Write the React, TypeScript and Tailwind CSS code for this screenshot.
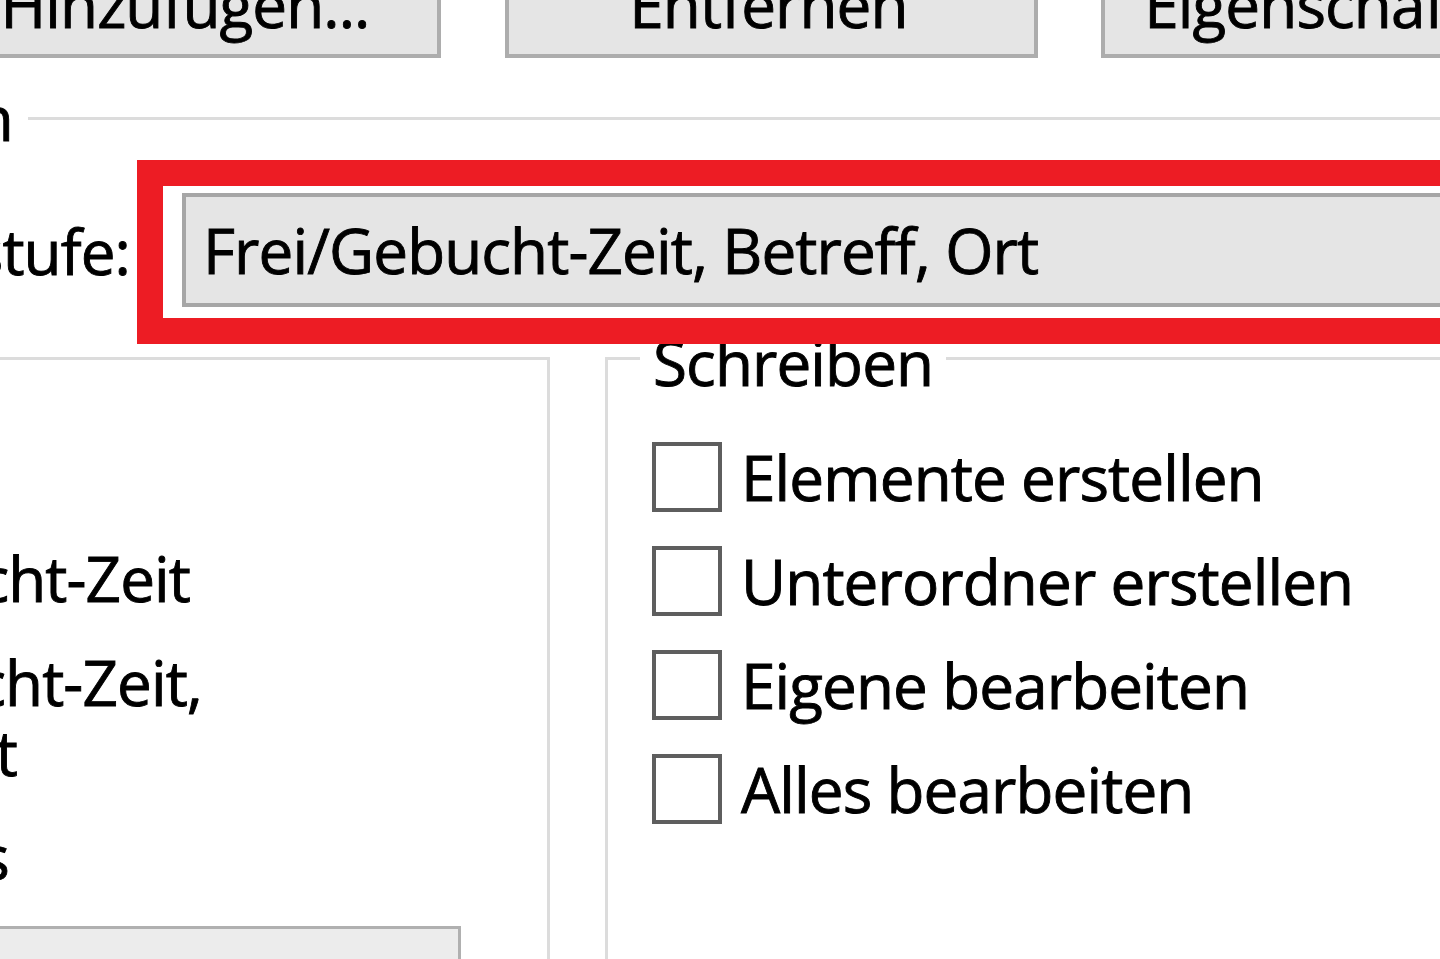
import React from "react";

function Btn({ label, className }: { label: string; className: string }) {
  return (
    <div
      className={
        "shrink-0 h-[100px] border-[4px] border-[#adadad] bg-[#e5e5e5] flex items-end justify-center pb-[15px] whitespace-nowrap " +
        className
      }
    >
      {label}
    </div>
  );
}

function EndText({ end, children }: { end: string; children: React.ReactNode }) {
  return (
    <div className={"flex justify-end whitespace-nowrap h-[70px] " + end}>
      <span>{children}</span>
    </div>
  );
}

function Check({ label }: { label: string }) {
  return (
    <div className="flex items-start h-[70px]">
      <div className="w-[70px] h-[70px] shrink-0 border-[4px] border-[#5e5e5e] bg-white" />
      <span className="ml-[19px] whitespace-nowrap">{label}</span>
    </div>
  );
}

export default function App() {
  return (
    <div className="w-[1440px] h-[959px] overflow-hidden bg-white text-black font-['Open_Sans','Noto_Sans',sans-serif] text-[62px] leading-[70px] tracking-[-0.9px] [-webkit-text-stroke:0.9px_#000] flex flex-col">
      {/* top buttons */}
      <div className="flex items-end h-[58px] shrink-0">
        <Btn label="Hinzufügen..." className="ml-[-111px] w-[552px] pl-[40px]" />
        <Btn label="Entfernen" className="ml-[64px] w-[533px] pr-[6px]" />
        <Btn label="Eigenschaften" className="ml-[63px] w-[533px] pr-[54px]" />
      </div>

      {/* group box header "Berechtigungen" */}
      <div className="flex items-start mt-[24px] shrink-0">
        <EndText end="w-[13px]">Berechtigungen</EndText>
        <div className="ml-[15px] mt-[35px] flex-1 h-[3px] bg-[#dcdcdc]" />
      </div>

      {/* permission level row */}
      <div className="flex items-start mt-[8px] shrink-0">
        <div className="mt-[56px]">
          <EndText end="w-[130px]">Berechtigungsstufe:</EndText>
        </div>
        <div className="relative z-10 ml-[7px] shrink-0 w-[1400px] border-[26px] border-[#ed1c24] bg-white pt-[7px] pl-[19px] pb-[11px]">
          <div className="w-[1400px] h-[114px] border-[4px] border-[#a6a6a6] bg-[#e5e5e5] flex items-center pl-[17px] whitespace-nowrap">
            Frei/Gebucht-Zeit, Betreff, Ort
          </div>
        </div>
      </div>

      {/* lower groups */}
      <div className="flex mt-[13px] flex-1 min-h-0">
        {/* Lesen group (mostly off-screen) */}
        <div className="w-[550px] shrink-0 border-t-[3px] border-r-[3px] border-[#dcdcdc] flex flex-col pt-[79px]">
          <div className="flex flex-col gap-[34px]">
            <EndText end="w-[0px] ml-[-120px]">Keine</EndText>
            <EndText end="w-[190px]">Frei/Gebucht-Zeit</EndText>
            <div className="flex flex-col">
              <EndText end="w-[202px]">Frei/Gebucht-Zeit,</EndText>
              <EndText end="w-[17px]">Betreff, Ort</EndText>
            </div>
            <EndText end="w-[9px]">Alle Details</EndText>
          </div>
          <div className="mt-[35px] ml-[-20px] w-[481px] h-[100px] shrink-0 border-[3px] border-[#b0b0b0] bg-[#ececec]" />
        </div>

        {/* Schreiben group */}
        <div className="ml-[55px] flex-1 border-t-[3px] border-l-[3px] border-[#dcdcdc] flex flex-col">
          <div className="relative self-start mt-[-33px] ml-[32px] px-[13px] bg-white whitespace-nowrap">
            Schreiben
          </div>
          <div className="flex flex-col gap-[34px] mt-[45px] pl-[44px]">
            <Check label="Elemente erstellen" />
            <Check label="Unterordner erstellen" />
            <Check label="Eigene bearbeiten" />
            <Check label="Alles bearbeiten" />
          </div>
        </div>
      </div>
    </div>
  );
}
